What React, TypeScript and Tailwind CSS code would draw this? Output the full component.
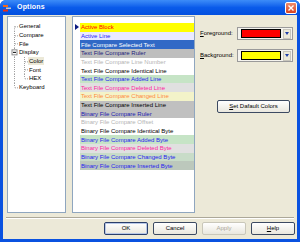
import React from "react"

const font = { fontFamily: '"Liberation Sans", Arial, sans-serif' }

const rows: [string, string, string][] = [
  ["Active Block", "bg-[#FFFF00]", "text-[#FF0000]"],
  ["Active Line", "bg-[#EAEAFF]", "text-[#1F1FF5]"],
  ["File Compare Selected Text", "bg-[#3169C6]", "text-white"],
  ["Text File Compare Ruler", "bg-[#BEBEBE]", "text-[#1C1C7A]"],
  ["Text File Compare Line Number", "bg-white", "text-[#B4B4B4]"],
  ["Text File Compare Identical Line", "bg-white", "text-black"],
  ["Text File Compare Added Line", "bg-[#C6E4C6]", "text-[#2424EE]"],
  ["Text File Compare Deleted Line", "bg-[#E0E0E0]", "text-[#FF1E9E]"],
  ["Text File Compare Changed Line", "bg-[#F3F3C9]", "text-[#FF8A3D]"],
  ["Text File Compare Inserted Line", "bg-[#C0C0C0]", "text-black"],
  ["Binary File Compare Ruler", "bg-[#C0C0C0]", "text-[#2222B0]"],
  ["Binary File Compare Offset", "bg-white", "text-[#B4B4B4]"],
  ["Binary File Compare Identical Byte", "bg-white", "text-black"],
  ["Binary File Compare Added Byte", "bg-[#C6E4C6]", "text-[#2424EE]"],
  ["Binary File Compare Deleted Byte", "bg-[#E0E0E0]", "text-[#FF1E9E]"],
  ["Binary File Compare Changed Byte", "bg-[#C8DCC8]", "text-[#2424EE]"],
  ["Binary File Compare Inserted Byte", "bg-[#BCC8BC]", "text-[#2424EE]"],
]

// connector drawing for one tree row
function Connector({ kind }: { kind: string }) {
  const h = 8.7
  const m = h / 2
  const dot = { stroke: "#A0A0A0", strokeWidth: 1, strokeDasharray: "1 1" }
  const sub = kind.startsWith("sub")
  return (
    <svg width={sub ? 20 : 10} height={h} className="shrink-0">
      {kind === "first" && <line x1="6.5" y1={m} x2="6.5" y2={h} {...dot} />}
      {(kind === "mid" || sub || kind === "box") && <line x1="6.5" y1="0" x2="6.5" y2={h} {...dot} />}
      {kind === "last" && <line x1="6.5" y1="0" x2="6.5" y2={m} {...dot} />}
      {kind !== "box" && !sub && <line x1="7" y1={m + 0.5} x2="10" y2={m + 0.5} {...dot} />}
      {kind === "box" && (
        <>
          <line x1="16.5" y1={m + 3} x2="16.5" y2={h} {...dot} />
          <rect x="4" y={m - 2.5} width="5" height="5" fill="white" stroke="#8C8C8C" strokeWidth="1" />
          <line x1="5" y1={m} x2="8" y2={m} stroke="#000" strokeWidth="1" />
        </>
      )}
      {kind === "sub" && <line x1="16.5" y1="0" x2="16.5" y2={h} {...dot} />}
      {kind === "sublast" && <line x1="16.5" y1="0" x2="16.5" y2={m} {...dot} />}
      {sub && <line x1="17" y1={m + 0.5} x2="20" y2={m + 0.5} {...dot} />}
    </svg>
  )
}

function TreeRow({ label, kind, selected }: { label: string; kind: string; selected?: boolean }) {
  return (
    <div className="flex items-center h-[8.7px]">
      <Connector kind={kind} />
      <span className={`px-[1px] leading-[8px] text-[6px] text-black ${selected ? "bg-[#ECE9D8]" : ""}`}>{label}</span>
    </div>
  )
}

function ColorCombo({ color }: { color: string }) {
  return (
    <div className="w-[56px] h-[13px] border border-[#9A9A9A] bg-[#F4F3EE] flex items-center p-[1px] gap-[2px]">
      <div className={`flex-1 h-[9px] ml-[2px] border border-black ${color}`} />
      <div className="w-[8px] h-[10px] bg-[#ECE9D8] border border-[#C8C6BC] flex items-center justify-center">
        <svg width="4" height="3"><path d="M0 0H4L2 3Z" fill="#1F3FA8" /></svg>
      </div>
    </div>
  )
}

function Btn({ children, disabled, def }: { children: React.ReactNode; disabled?: boolean; def?: boolean }) {
  return (
    <div
      className={`w-[44px] h-[13px] rounded-[2px] border flex items-center justify-center text-[6px] bg-gradient-to-b from-white to-[#E9E7DE] ${
        disabled ? "border-[#C9C7BA] text-[#ACA899]" : def ? "border-[#2B3F6B] text-black shadow-[inset_0_0_0_1px_#B8C8E8]" : "border-[#3C4A62] text-black"
      }`}
    >
      {children}
    </div>
  )
}

export default function App() {
  return (
    <div style={font} className="w-[300px] h-[242px] flex flex-col bg-[#0A52E0] rounded-t-[6px] overflow-hidden">
      {/* title bar */}
      <div className="h-[15px] shrink-0 flex items-center bg-gradient-to-b from-[#3C8CF8] via-[#0A5BEA] to-[#0350DF] pl-[3px] pr-[3px]">
        <svg width="8" height="8" className="shrink-0">
          <rect x="0" y="1" width="5" height="2" fill="#F06A1A" />
          <rect x="3" y="3.5" width="5" height="1.5" fill="#C8C8C8" />
          <rect x="0" y="5.5" width="5" height="2" fill="#E83018" />
        </svg>
        <span className="ml-[6px] text-white font-bold text-[7px] tracking-[0.2px]">Options</span>
        <div className="ml-auto w-[12px] h-[12px] rounded-[2px] border border-white bg-gradient-to-b from-[#F08A6A] to-[#D8431E] flex items-center justify-center">
          <svg width="6" height="6"><path d="M0.5 0.5L5.5 5.5M5.5 0.5L0.5 5.5" stroke="white" strokeWidth="1.4" /></svg>
        </div>
      </div>

      {/* body */}
      <div className="flex-1 mx-[3px] mb-[3px] bg-[#ECE9D8] flex flex-col">
        <div className="flex mt-[1px] h-[197px] pl-[4px]">
          {/* tree */}
          <div className="w-[59px] h-full border border-[#8FA6BF] bg-white pt-[5px]">
            <TreeRow label="General" kind="first" />
            <TreeRow label="Compare" kind="mid" />
            <TreeRow label="File" kind="mid" />
            <TreeRow label="Display" kind="box" />
            <TreeRow label="Color" kind="sub" selected />
            <TreeRow label="Font" kind="sub" />
            <TreeRow label="HEX" kind="sublast" />
            <TreeRow label="Keyboard" kind="last" />
          </div>

          {/* list */}
          <div className="w-[123px] h-full ml-[6px] border border-[#8FA6BF] bg-white pt-[6px] flex flex-col">
            {rows.map(([t, bg, fg], i) => (
              <div key={t} className="flex h-[8.65px]">
                <div className="w-[7px] shrink-0 flex items-center justify-center">
                  {i === 0 && (
                    <svg width="4" height="6"><path d="M0 0L4 3L0 6Z" fill="#0A1A80" /></svg>
                  )}
                </div>
                <div className={`flex-1 flex items-center pl-[1px] text-[6px] leading-[8px] whitespace-nowrap overflow-hidden ${bg} ${fg}`}>
                  {t}
                </div>
              </div>
            ))}
          </div>

          {/* color options */}
          <div className="flex-1 flex flex-col pl-[5px] pr-[4px] pt-[11px] text-[6px] text-black">
            <div className="flex items-center">
              <span className="w-[37px]"><u>F</u>oreground:</span>
              <ColorCombo color="bg-[#FF0000]" />
            </div>
            <div className="flex items-center mt-[9px]">
              <span className="w-[37px]"><u>B</u>ackground:</span>
              <ColorCombo color="bg-[#FFFF00]" />
            </div>
            <div className="ml-[17px] mt-[38px] w-[73px] h-[13px] rounded-[2px] border border-[#3C4A62] bg-gradient-to-b from-white to-[#E9E7DE] flex items-center justify-center">
              <span><u>S</u>et Dafault Colors</span>
            </div>
          </div>
        </div>

        <div className="mt-[4px] mx-[3px] h-[2px] border-t border-[#ACA899] border-b border-b-white" />

        <div className="flex justify-end gap-[5px] pr-[2px] mt-[3px]">
          <Btn def>OK</Btn>
          <Btn>Cancel</Btn>
          <Btn disabled>Apply</Btn>
          <Btn><u>H</u>elp</Btn>
        </div>
      </div>
    </div>
  )
}
